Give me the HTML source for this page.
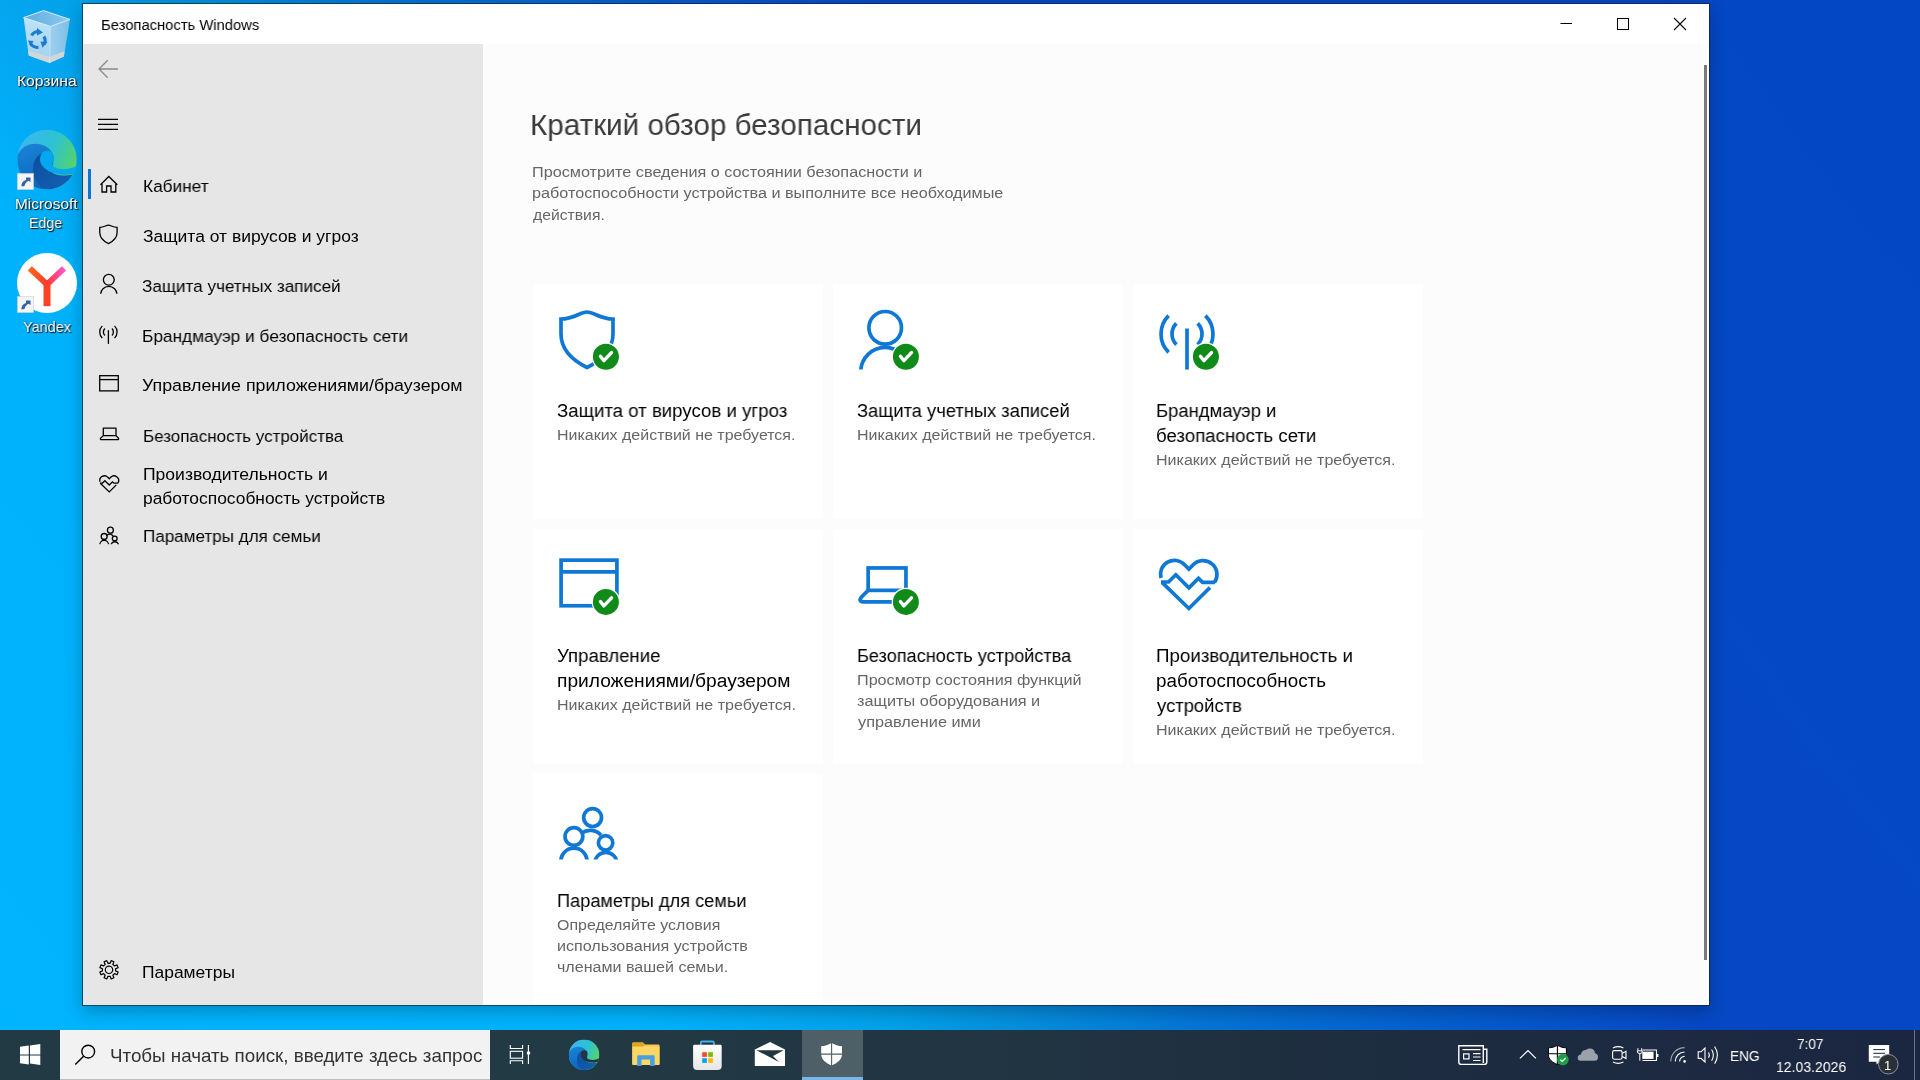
<!DOCTYPE html>
<html><head><meta charset="utf-8"><title>Безопасность Windows</title>
<style>
html,body{margin:0;padding:0;width:1920px;height:1080px;overflow:hidden;}
body{position:relative;font-family:"Liberation Sans", sans-serif;background:linear-gradient(52deg,#00b4fd 0%,#00b2fb 25%,#04a8f2 29.5%,#02a0e8 34%,#0590dc 38%,#0574d4 45%,#0558cb 56%,#0648c4 63%,#0447c5 100%);}
.t{position:absolute;white-space:nowrap;font-family:"Liberation Sans", sans-serif;will-change:transform;}
.r{position:absolute;}
.ds{color:#fff;text-shadow:0 0 2px #000,1px 1px 1px #000;}
svg{position:absolute;left:0;top:0;}
</style></head><body>

<div class="r" style="left:82px;top:3px;width:1628px;height:1003px;box-shadow:0 5px 16px rgba(0,0,0,0.25);"></div>
<div class="r" style="left:82px;top:3px;width:1628px;height:1003px;box-sizing:border-box;border:1px solid rgba(20,30,40,0.7);"></div>
<div class="r" style="left:83px;top:4px;width:1626px;height:1001px;background:#fcfcfc;"></div>
<div class="r" style="left:83px;top:4px;width:1626px;height:40px;background:#ffffff;"></div>
<div class="r" style="left:83px;top:44px;width:400px;height:961px;background:#e6e6e6;"></div>
<div class="r" style="left:1707px;top:44px;width:2px;height:961px;background:#ffffff;"></div>
<div class="r" style="left:1704px;top:65px;width:3px;height:895px;background:#7a7a7a;box-shadow:0 0 0 1px #fff;"></div>
<div class="r" style="left:88px;top:169px;width:3px;height:30px;background:#0078d7;"></div>
<div class="r" style="left:533px;top:284px;width:290px;height:235px;background:#ffffff;"></div>
<div class="r" style="left:533px;top:529px;width:290px;height:235px;background:#ffffff;"></div>
<div class="r" style="left:533px;top:774px;width:290px;height:230px;background:#ffffff;"></div>
<div class="r" style="left:833px;top:284px;width:290px;height:235px;background:#ffffff;"></div>
<div class="r" style="left:833px;top:529px;width:290px;height:235px;background:#ffffff;"></div>
<div class="r" style="left:1133px;top:284px;width:290px;height:235px;background:#ffffff;"></div>
<div class="r" style="left:1133px;top:529px;width:290px;height:235px;background:#ffffff;"></div>
<div class="t" style="left:100.65px;top:15px;font-size:15.5px;line-height:19.38px;color:#000;transform:scaleX(0.9533);transform-origin:0 0;">Безопасность Windows</div>
<div class="t" style="left:143.31px;top:176px;font-size:17.4px;line-height:21.75px;color:#000;transform:scaleX(0.9915);transform-origin:0 0;">Кабинет</div>
<div class="t" style="left:142.60px;top:226px;font-size:17.4px;line-height:21.75px;color:#000;transform:scaleX(1.0038);transform-origin:0 0;">Защита от вирусов и угроз</div>
<div class="t" style="left:142.42px;top:276px;font-size:17.4px;line-height:21.75px;color:#000;transform:scaleX(0.9845);transform-origin:0 0;">Защита учетных записей</div>
<div class="t" style="left:142.41px;top:326px;font-size:17.4px;line-height:21.75px;color:#000;transform:scaleX(0.9932);transform-origin:0 0;">Брандмауэр и безопасность сети</div>
<div class="t" style="left:142.38px;top:375px;font-size:17.4px;line-height:21.75px;color:#000;transform:scaleX(1.0235);transform-origin:0 0;">Управление приложениями/браузером</div>
<div class="t" style="left:143.03px;top:426px;font-size:17.4px;line-height:21.75px;color:#000;transform:scaleX(0.9746);transform-origin:0 0;">Безопасность устройства</div>
<div class="t" style="left:142.99px;top:464px;font-size:17.4px;line-height:21.75px;color:#000;transform:scaleX(1.0083);transform-origin:0 0;">Производительность и</div>
<div class="t" style="left:143.00px;top:488px;font-size:17.4px;line-height:21.75px;color:#000;">работоспособность устройств</div>
<div class="t" style="left:143.02px;top:526px;font-size:17.4px;line-height:21.75px;color:#000;transform:scaleX(0.9810);transform-origin:0 0;">Параметры для семьи</div>
<div class="t" style="left:142.20px;top:962px;font-size:17.4px;line-height:21.75px;color:#000;transform:scaleX(1.0022);transform-origin:0 0;">Параметры</div>
<div class="t" style="left:530.03px;top:106px;font-size:30px;line-height:37.50px;color:#3a3a3a;transform:scaleX(0.9873);transform-origin:0 0;">Краткий обзор безопасности</div>
<div class="t" style="left:531.95px;top:162px;font-size:15.5px;line-height:19.38px;color:#666666;transform:scaleX(1.0458);transform-origin:0 0;">Просмотрите сведения о состоянии безопасности и</div>
<div class="t" style="left:531.96px;top:183px;font-size:15.5px;line-height:19.38px;color:#666666;transform:scaleX(1.0444);transform-origin:0 0;">работоспособности устройства и выполните все необходимые</div>
<div class="t" style="left:533.00px;top:205px;font-size:15.5px;line-height:19.38px;color:#666666;transform:scaleX(1.0143);transform-origin:0 0;">действия.</div>
<div class="t" style="left:556.71px;top:399px;font-size:18.8px;line-height:23.50px;color:#000;transform:scaleX(0.9924);transform-origin:0 0;">Защита от вирусов и угроз</div>
<div class="t" style="left:556.67px;top:425px;font-size:15.5px;line-height:19.38px;color:#666666;transform:scaleX(1.0306);transform-origin:0 0;">Никаких действий не требуется.</div>
<div class="t" style="left:856.92px;top:399px;font-size:18.8px;line-height:23.50px;color:#000;transform:scaleX(0.9759);transform-origin:0 0;">Защита учетных записей</div>
<div class="t" style="left:856.87px;top:425px;font-size:15.5px;line-height:19.38px;color:#666666;transform:scaleX(1.0328);transform-origin:0 0;">Никаких действий не требуется.</div>
<div class="t" style="left:1156.42px;top:399px;font-size:18.8px;line-height:23.50px;color:#000;transform:scaleX(0.9821);transform-origin:0 0;">Брандмауэр и</div>
<div class="t" style="left:1156.41px;top:424px;font-size:18.8px;line-height:23.50px;color:#000;transform:scaleX(0.9925);transform-origin:0 0;">безопасность сети</div>
<div class="t" style="left:1156.37px;top:450px;font-size:15.5px;line-height:19.38px;color:#666666;transform:scaleX(1.0349);transform-origin:0 0;">Никаких действий не требуется.</div>
<div class="t" style="left:556.91px;top:644px;font-size:18.8px;line-height:23.50px;color:#000;transform:scaleX(0.9913);transform-origin:0 0;">Управление</div>
<div class="t" style="left:556.88px;top:669px;font-size:18.8px;line-height:23.50px;color:#000;transform:scaleX(1.0211);transform-origin:0 0;">приложениями/браузером</div>
<div class="t" style="left:556.87px;top:695px;font-size:15.5px;line-height:19.38px;color:#666666;transform:scaleX(1.0328);transform-origin:0 0;">Никаких действий не требуется.</div>
<div class="t" style="left:856.93px;top:644px;font-size:18.8px;line-height:23.50px;color:#000;transform:scaleX(0.9661);transform-origin:0 0;">Безопасность устройства</div>
<div class="t" style="left:856.86px;top:670px;font-size:15.5px;line-height:19.38px;color:#666666;transform:scaleX(1.0437);transform-origin:0 0;">Просмотр состояния функций</div>
<div class="t" style="left:856.85px;top:691px;font-size:15.5px;line-height:19.38px;color:#666666;transform:scaleX(1.0503);transform-origin:0 0;">защиты оборудования и</div>
<div class="t" style="left:857.90px;top:712px;font-size:15.5px;line-height:19.38px;color:#666666;transform:scaleX(1.0500);transform-origin:0 0;">управление ими</div>
<div class="t" style="left:1156.41px;top:644px;font-size:18.8px;line-height:23.50px;color:#000;transform:scaleX(0.9949);transform-origin:0 0;">Производительность и</div>
<div class="t" style="left:1156.40px;top:669px;font-size:18.8px;line-height:23.50px;color:#000;">работоспособность</div>
<div class="t" style="left:1157.40px;top:694px;font-size:18.8px;line-height:23.50px;color:#000;transform:scaleX(0.9814);transform-origin:0 0;">устройств</div>
<div class="t" style="left:1156.37px;top:720px;font-size:15.5px;line-height:19.38px;color:#666666;transform:scaleX(1.0349);transform-origin:0 0;">Никаких действий не требуется.</div>
<div class="t" style="left:556.93px;top:889px;font-size:18.8px;line-height:23.50px;color:#000;transform:scaleX(0.9680);transform-origin:0 0;">Параметры для семьи</div>
<div class="t" style="left:556.87px;top:915px;font-size:15.5px;line-height:19.38px;color:#666666;transform:scaleX(1.0280);transform-origin:0 0;">Определяйте условия</div>
<div class="t" style="left:556.86px;top:936px;font-size:15.5px;line-height:19.38px;color:#666666;transform:scaleX(1.0390);transform-origin:0 0;">использования устройств</div>
<div class="t" style="left:556.86px;top:957px;font-size:15.5px;line-height:19.38px;color:#666666;transform:scaleX(1.0356);transform-origin:0 0;">членами вашей семьи.</div>
<div class="r" style="left:0;top:1030px;width:1920px;height:50px;background:linear-gradient(90deg,#223a44 0%,#223a44 28%,#213542 52%,#1e2e40 68%,#1b2641 100%);"></div>
<div class="r" style="left:60px;top:1030px;width:430px;height:50px;background:#f2f2f2;"></div>
<div class="r" style="left:60px;top:1079px;width:430px;height:1px;background:#bdbdbd;"></div>
<div class="r" style="left:802px;top:1030px;width:61px;height:50px;background:#4e5f67;"></div>
<div class="r" style="left:802px;top:1077px;width:61px;height:3px;background:#77b8ec;"></div>
<div class="r" style="left:1914px;top:1030px;width:1px;height:50px;background:#6a7588;"></div>
<div class="t" style="left:109.79px;top:1044px;font-size:18.6px;line-height:23.25px;color:#333333;transform:scaleX(1.0093);transform-origin:0 0;">Чтобы начать поиск, введите здесь запрос</div>
<div class="t" style="left:1730.37px;top:1046px;font-size:15.5px;line-height:19.38px;color:#ffffff;transform:scaleX(0.8828);transform-origin:0 0;">ENG</div>
<div class="t" style="left:1797.02px;top:1034px;font-size:15.5px;line-height:19.38px;color:#ffffff;transform:scaleX(0.8759);transform-origin:0 0;">7:07</div>
<div class="t" style="left:1776.09px;top:1057px;font-size:15.5px;line-height:19.38px;color:#ffffff;transform:scaleX(0.9053);transform-origin:0 0;">12.03.2026</div>
<div class="t" style="left:16.96px;top:72px;font-size:15px;line-height:18.75px;color:#fff;transform:scaleX(1.0429);transform-origin:0 0;text-shadow:1px 1px 1px rgba(0,0,0,0.95),0 0 2px rgba(0,0,0,0.5);">Корзина</div>
<div class="t" style="left:15.07px;top:195px;font-size:15px;line-height:18.75px;color:#fff;transform:scaleX(1.0283);transform-origin:0 0;text-shadow:1px 1px 1px rgba(0,0,0,0.95),0 0 2px rgba(0,0,0,0.5);">Microsoft</div>
<div class="t" style="left:29.05px;top:214px;font-size:15px;line-height:18.75px;color:#fff;transform:scaleX(0.9471);transform-origin:0 0;text-shadow:1px 1px 1px rgba(0,0,0,0.95),0 0 2px rgba(0,0,0,0.5);">Edge</div>
<div class="t" style="left:22.64px;top:318px;font-size:15px;line-height:18.75px;color:#fff;transform:scaleX(0.9646);transform-origin:0 0;text-shadow:1px 1px 1px rgba(0,0,0,0.95),0 0 2px rgba(0,0,0,0.5);">Yandex</div>
<svg width="1920" height="1080" viewBox="0 0 1920 1080"><defs><clipPath id="clipP" clipPathUnits="userSpaceOnUse"><rect x="0" y="0" width="80" height="69.6"/></clipPath><clipPath id="clipF" clipPathUnits="userSpaceOnUse"><rect x="0" y="0" width="80" height="59.6"/></clipPath></defs><g transform="translate(550,300)" fill="none" stroke="#0f78d4" stroke-width="3.7"><path d="M37,12 C30,12 24,19 11,19 L11,34 C11,50 24,61 37,67.5 C50,61 63,50 63,34 L63,19 C50,19 44,12 37,12 Z"/></g><g transform="translate(850,300)" fill="none" stroke="#0f78d4" stroke-width="3.7"><circle cx="35.2" cy="27.8" r="16.3"/><path clip-path="url(#clipP)" d="M10.7,71.9 A24.5,24.5 0 0 1 59.7,71.9"/></g><g transform="translate(1150,300)" fill="none" stroke="#0f78d4" stroke-width="3.7"><path d="M37,28.5 L37,69.6"/><path d="M18.62,15.62 A26,26 0 0 0 18.62,52.38"/><path d="M55.38,15.62 A26,26 0 0 1 55.38,52.38"/><path d="M26.39,23.39 A15,15 0 0 0 26.39,44.61"/><path d="M47.61,23.39 A15,15 0 0 1 47.61,44.61"/></g><g transform="translate(550,550)" fill="none" stroke="#0f78d4" stroke-width="3.7"><rect x="11.1" y="10.15" width="55.8" height="45.6"/><path d="M11.1,21.9 L66.9,21.9"/></g><g transform="translate(850,550)" fill="none" stroke="#0f78d4" stroke-width="3.7"><rect x="18.15" y="17.95" width="37.8" height="22.4"/><path d="M18.15,40.35 L12,46.5 Q9,49.5 10.5,51 Q11.5,51.8 14,51.8 L62,51.8"/></g><g transform="translate(1150,550)" fill="none" stroke="#0f78d4" stroke-width="3.7"><path d="M11,28 A13.9,13.9 0 0 1 34.6,14.8 L38.9,19.1 L43.2,14.8 A13.9,13.9 0 0 1 64.5,32.5"/><path d="M11,32 L18.5,32 L25.8,24.8 L38.9,37.8 L48.5,28.3 L52.5,32.3 L65,32.3"/><path d="M12,32.3 L38.9,58.5 L60,37.5"/></g><g transform="translate(550,800)" fill="none" stroke="#0f78d4" stroke-width="3.7"><circle cx="42.6" cy="17.6" r="8.9"/><circle cx="23.9" cy="36.5" r="8.9"/><circle cx="55.6" cy="42.8" r="7.2"/><path clip-path="url(#clipF)" d="M10.8,61.25 A13.15,13.15 0 0 1 37.1,61.25"/><path clip-path="url(#clipF)" d="M44.8,63.35 A11.05,11.05 0 0 1 66.9,63.35"/><path d="M31.5,33.2 A14.5,14.5 0 0 1 51,35.2"/></g><circle cx="605.9" cy="356.7" r="14.2" fill="#fff" stroke="none"/><circle cx="605.9" cy="356.7" r="13" fill="#108a18" stroke="none"/><path d="M600.4,356.3 L603.9,360.7 L611.5,352.59999999999997" fill="none" stroke="#fff" stroke-width="3.4" stroke-linecap="round" stroke-linejoin="round"/><circle cx="905.9" cy="356.7" r="14.2" fill="#fff" stroke="none"/><circle cx="905.9" cy="356.7" r="13" fill="#108a18" stroke="none"/><path d="M900.4,356.3 L903.9,360.7 L911.5,352.59999999999997" fill="none" stroke="#fff" stroke-width="3.4" stroke-linecap="round" stroke-linejoin="round"/><circle cx="1205.9" cy="356.7" r="14.2" fill="#fff" stroke="none"/><circle cx="1205.9" cy="356.7" r="13" fill="#108a18" stroke="none"/><path d="M1200.4,356.3 L1203.9,360.7 L1211.5,352.59999999999997" fill="none" stroke="#fff" stroke-width="3.4" stroke-linecap="round" stroke-linejoin="round"/><circle cx="605.9" cy="601.9" r="14.2" fill="#fff" stroke="none"/><circle cx="605.9" cy="601.9" r="13" fill="#108a18" stroke="none"/><path d="M600.4,601.5 L603.9,605.9 L611.5,597.8" fill="none" stroke="#fff" stroke-width="3.4" stroke-linecap="round" stroke-linejoin="round"/><circle cx="905.9" cy="601.9" r="14.2" fill="#fff" stroke="none"/><circle cx="905.9" cy="601.9" r="13" fill="#108a18" stroke="none"/><path d="M900.4,601.5 L903.9,605.9 L911.5,597.8" fill="none" stroke="#fff" stroke-width="3.4" stroke-linecap="round" stroke-linejoin="round"/><g transform="translate(96.1,221.1) scale(0.3333)" fill="none" stroke="#000" stroke-width="3.9"><path d="M37,12 C30,12 24,19 11,19 L11,34 C11,50 24,61 37,67.5 C50,61 63,50 63,34 L63,19 C50,19 44,12 37,12 Z"/></g><g transform="translate(97.07,270.5) scale(0.3333)" fill="none" stroke="#000" stroke-width="3.9"><circle cx="35.2" cy="27.8" r="16.3"/><path clip-path="url(#clipP)" d="M10.7,71.9 A24.5,24.5 0 0 1 59.7,71.9"/></g><g transform="translate(96.07,320.67) scale(0.3333)" fill="none" stroke="#000" stroke-width="3.9"><path d="M37,28.5 L37,69.6"/><path d="M18.62,15.62 A26,26 0 0 0 18.62,52.38"/><path d="M55.38,15.62 A26,26 0 0 1 55.38,52.38"/><path d="M26.39,23.39 A15,15 0 0 0 26.39,44.61"/><path d="M47.61,23.39 A15,15 0 0 1 47.61,44.61"/></g><g transform="translate(96,372.3) scale(0.3333)" fill="none" stroke="#000" stroke-width="3.9"><rect x="11.1" y="10.15" width="55.8" height="45.6"/><path d="M11.1,21.9 L66.9,21.9"/></g><g transform="translate(96.3,472.4) scale(0.3333)" fill="none" stroke="#000" stroke-width="3.9"><path d="M11,28 A13.9,13.9 0 0 1 34.6,14.8 L38.9,19.1 L43.2,14.8 A13.9,13.9 0 0 1 64.5,32.5"/><path d="M11,32 L18.5,32 L25.8,24.8 L38.9,37.8 L48.5,28.3 L52.5,32.3 L65,32.3"/><path d="M12,32.3 L38.9,58.5 L60,37.5"/></g><g transform="translate(96.2,524.3) scale(0.3333)" fill="none" stroke="#000" stroke-width="3.9"><circle cx="42.6" cy="17.6" r="8.9"/><circle cx="23.9" cy="36.5" r="8.9"/><circle cx="55.6" cy="42.8" r="7.2"/><path clip-path="url(#clipF)" d="M10.8,61.25 A13.15,13.15 0 0 1 37.1,61.25"/><path clip-path="url(#clipF)" d="M44.8,63.35 A11.05,11.05 0 0 1 66.9,63.35"/><path d="M31.5,33.2 A14.5,14.5 0 0 1 51,35.2"/></g><path d="M100.5,184.8 L108.8,176.5 L117.3,184.8 M102,183.2 L102,192 L106.6,192 L106.6,186 L111,186 L111,192 L115.8,192 L115.8,183.2" fill="none" stroke="#000" stroke-width="1.3"/><path d="M103.3,435.6 L103.3,428.1 L116,428.1 L116,435.6 Z M103.3,435.6 L100.5,438.3 Q100,439.6 101.5,439.6 L117.6,439.6 Q119,439.6 118.5,438.3 L116,435.6" fill="none" stroke="#000" stroke-width="1.3" stroke-linejoin="round"/><path d="M107.75,60.2 L99,69 L107.75,77.7 M99.5,69 L118,69" fill="none" stroke="#8a8a8a" stroke-width="1.3"/><path d="M98,119.3 L118,119.3 M98,124.4 L118,124.4 M98,129.4 L118,129.4" fill="none" stroke="#000" stroke-width="1.2"/><path d="M109.00,963.20 L110.09,963.29 L111.19,960.66 L113.91,961.79 L112.83,964.43 L113.67,965.13 L114.37,965.97 L117.01,964.89 L118.14,967.61 L115.51,968.71 L115.60,969.80 L115.51,970.89 L118.14,971.99 L117.01,974.71 L114.37,973.63 L113.67,974.47 L112.83,975.17 L113.91,977.81 L111.19,978.94 L110.09,976.31 L109.00,976.40 L107.91,976.31 L106.81,978.94 L104.09,977.81 L105.17,975.17 L104.33,974.47 L103.63,973.63 L100.99,974.71 L99.86,971.99 L102.49,970.89 L102.40,969.80 L102.49,968.71 L99.86,967.61 L100.99,964.89 L103.63,965.97 L104.33,965.13 L105.17,964.43 L104.09,961.79 L106.81,960.66 L107.91,963.29 Z" fill="none" stroke="#000" stroke-width="1.2" stroke-linejoin="round"/><circle cx="109" cy="969.8" r="3.7" fill="none" stroke="#000" stroke-width="1.2"/><path d="M1560.5,23.5 L1572,23.5" stroke="#000" stroke-width="1" fill="none"/><rect x="1617.5" y="18.5" width="11" height="11" stroke="#000" stroke-width="1" fill="none"/><path d="M1674,18 L1686,30 M1686,18 L1674,30" stroke="#000" stroke-width="1.1" fill="none"/><path d="M20,1046.8 L28.8,1045.6 L28.8,1054.4 L20,1054.4 Z M30,1045.4 L40.3,1044 L40.3,1054.4 L30,1054.4 Z M20,1055.6 L28.8,1055.6 L28.8,1064.4 L20,1063.2 Z M30,1055.6 L40.3,1055.6 L40.3,1065 L30,1063.6 Z" fill="#fff"/><circle cx="88.2" cy="1051.6" r="6.4" fill="none" stroke="#000" stroke-width="1.4"/><path d="M83.6,1056.2 L75.3,1064.5" stroke="#000" stroke-width="1.5" fill="none"/><path d="M510.3,1045 L510.3,1048.5 L522.6,1048.5 L522.6,1045 M510.3,1064 L510.3,1060.8 L522.6,1060.8 L522.6,1064 M528.4,1045 L528.4,1064" fill="none" stroke="#fff" stroke-width="1.1"/><rect x="510.3" y="1051.3" width="12.3" height="6.9" fill="none" stroke="#fff" stroke-width="1.1"/><rect x="526.9" y="1051.6" width="3.2" height="2.8" fill="#fff"/><g transform="translate(568.8,1039.6) scale(0.51)">
<defs>
<linearGradient id="eg1t" x1="0" y1="0.3" x2="1" y2="0.7"><stop offset="0" stop-color="#3bb8f0"/><stop offset="0.5" stop-color="#2cc2d4"/><stop offset="1" stop-color="#5cd65a"/></linearGradient>
<linearGradient id="eg2t" x1="0" y1="0" x2="0.3" y2="1"><stop offset="0" stop-color="#1a86d6"/><stop offset="1" stop-color="#0c66c0"/></linearGradient>
<linearGradient id="eg3t" x1="0" y1="0" x2="1" y2="1"><stop offset="0" stop-color="#0d4e9e"/><stop offset="1" stop-color="#1460b4"/></linearGradient>
<clipPath id="ect"><circle cx="30" cy="30" r="30"/></clipPath>
</defs>
<g clip-path="url(#ect)">
<rect x="0" y="0" width="60" height="60" fill="url(#eg1t)"/>
<path d="M0,26 C4,17 12,14 18,14 C26,14 34,18 36.5,26 L36.5,31 L34,60 L0,60 Z" fill="url(#eg2t)"/>
<path d="M36.5,26 C36,21 30,20 26,22 C22.5,24 22.5,30 24,34 C27,41 36,44 44,45 C50,45.5 55,45 60,43 L60,36 C55,40 46,40.5 40.5,39 C37,38 35,36.5 35.5,34 C36,32 37,29 36.5,26 Z" fill="#22363f"/>
<path d="M25,23.5 C19,26 16,32 16,40 C16,52 24,60 32,60 C42,60 52,53 56,45 C50,46.5 44,46.5 38,44.5 C30,42 24,37 23,32 C22.5,28 23.5,25.5 25,23.5 Z" fill="url(#eg3t)"/>
</g></g><path d="M632.3,1043.4 Q632.3,1042.4 633.3,1042.4 L643,1042.4 L645,1044.5 L658.5,1044.5 Q659.5,1044.5 659.5,1045.5 L659.5,1064.1 Q659.5,1065.1 658.5,1065.1 L633.3,1065.1 Q632.3,1065.1 632.3,1064.1 Z" fill="#f8c94c"/><path d="M632.3,1046.5 L659.5,1046.5 L659.5,1064.1 Q659.5,1065.1 658.5,1065.1 L633.3,1065.1 Q632.3,1065.1 632.3,1064.1 Z" fill="#fcd765"/><path d="M632.3,1043.4 Q632.3,1042.4 633.3,1042.4 L643,1042.4 L645,1044.5 L643.5,1046.5 L632.3,1046.5 Z" fill="#e0a51f"/><path d="M637.2,1066 L637.2,1056.3 Q637.2,1055.3 638.2,1055.3 L653.7,1055.3 Q654.7,1055.3 654.7,1056.3 L654.7,1066 L650.1,1066 L650.1,1059.4 L641.5,1059.4 L641.5,1066 Z" fill="#4a9fe0"/><path d="M700.8,1046.5 L700.8,1043 Q700.8,1041.5 702.3,1041.5 L712.5,1041.5 Q714,1041.5 714,1043 L714,1046.5" fill="none" stroke="#3fb1ee" stroke-width="1.8"/><defs><linearGradient id="stg" x1="0" y1="0" x2="0" y2="1"><stop offset="0" stop-color="#ffffff"/><stop offset="1" stop-color="#e6e6e6"/></linearGradient></defs><path d="M693.1,1046 Q693.1,1044.7 694.4,1044.7 L720.4,1044.7 Q721.7,1044.7 721.7,1046 L721.7,1066 Q721.7,1070 717.7,1070 L697.1,1070 Q693.1,1070 693.1,1066 Z" fill="url(#stg)"/><rect x="702.2" y="1052.2" width="4.7" height="4.7" fill="#f25022"/><rect x="708.2" y="1052.2" width="4.7" height="4.7" fill="#7fba00"/><rect x="702.2" y="1058.2" width="4.7" height="4.7" fill="#00a4ef"/><rect x="708.2" y="1058.2" width="4.7" height="4.7" fill="#ffb900"/><path d="M754.8,1049.5 L770.1,1042 L785,1049.5 L785,1066.1 L754.8,1066.1 Z" fill="#fff"/><path d="M756.4,1050.2 L783.7,1050.2 L773,1056 L778.9,1061.9 Z" fill="#22363f"/><path d="M831.6,1043 C828,1045 825,1046.2 821.2,1046.2 L821.2,1054 C821.2,1059.5 826,1063 831.6,1065.5 C837.2,1063 842,1059.5 842,1054 L842,1046.2 C838.2,1046.2 835.2,1045 831.6,1043 Z" fill="#fff"/><path d="M831.6,1043 L831.6,1066 M821,1054.1 L842.2,1054.1" stroke="#4e5f67" stroke-width="1.1"/><path d="M1458.8,1045.8 L1483.3,1045.8 L1483.3,1049.2 L1486.8,1049.2 L1486.8,1062 Q1486.8,1064.4 1484.4,1064.4 L1461.2,1064.4 Q1458.8,1064.4 1458.8,1062 Z M1483.3,1049.2 L1483.3,1063" fill="none" stroke="#fff" stroke-width="1.4"/><path d="M1462.5,1049.6 L1480.5,1049.6 M1473,1053.6 L1480.5,1053.6 M1473,1057 L1480.5,1057 M1473,1060.5 L1480.5,1060.5" stroke="#fff" stroke-width="1.2"/><rect x="1463.6" y="1053.9" width="5.4" height="5" fill="none" stroke="#fff" stroke-width="1.2"/><path d="M1519.9,1058.4 L1528,1050.6 L1535.9,1058.4" fill="none" stroke="#fff" stroke-width="1.2"/><path d="M1557.4,1045.3 C1554.5,1047 1551.5,1047.8 1548.4,1047.8 L1548.4,1054.5 C1548.4,1059.5 1552.5,1062.5 1557.4,1064.6 C1562.3,1062.5 1566.4,1059.5 1566.4,1054.5 L1566.4,1047.8 C1563.3,1047.8 1560.3,1047 1557.4,1045.3 Z" fill="#fff" stroke="#000" stroke-width="1"/><path d="M1557.4,1045.5 L1557.4,1064.5 M1548.4,1053.8 L1566.4,1053.8" stroke="#000" stroke-width="1.1"/><circle cx="1562.9" cy="1059.6" r="5.8" fill="#1f9c48"/><path d="M1560.2,1059.6 L1562.2,1061.5 L1565.7,1058" fill="none" stroke="#fff" stroke-width="1.2"/><path d="M1580.5,1060.8 Q1577.7,1060.8 1577.7,1057.8 Q1577.7,1054.6 1581,1054.4 Q1581.5,1050.2 1585.8,1050 Q1588,1048.3 1590.8,1048.6 Q1594.6,1049.2 1595,1053.3 Q1598,1053.8 1598,1057.2 Q1598,1060.8 1594.5,1060.8 Z" fill="#9aa1ab"/><rect x="1612.6" y="1050.6" width="9.5" height="8.6" rx="1.6" fill="none" stroke="#fff" stroke-width="1.1"/><path d="M1622.3,1053.2 L1626,1051.3 L1626,1058.5 L1622.3,1056.6" fill="none" stroke="#fff" stroke-width="1.1"/><path d="M1613,1048 Q1618,1045.2 1623.4,1048 M1613,1062 Q1618,1064.8 1623.4,1062" fill="none" stroke="#fff" stroke-width="1.1"/><path d="M1639.8,1060.7 L1639.8,1053.5 M1637.9,1050.8 L1637.9,1048.2 M1641.7,1050.8 L1641.7,1048.2 M1637.4,1050.8 L1642.2,1050.8 L1642.2,1052 Q1642.2,1053.5 1639.8,1053.5 Q1637.4,1053.5 1637.4,1052 Z" fill="none" stroke="#fff" stroke-width="1"/><path d="M1642.5,1050 L1656.5,1050 L1656.5,1060.5 L1642.5,1060.5" fill="none" stroke="#fff" stroke-width="1.1"/><rect x="1657" y="1054" width="1.4" height="3" fill="#fff"/><rect x="1642.3" y="1051.7" width="11.2" height="7.2" fill="#fff"/><circle cx="1684.6" cy="1061.4" r="1.3" fill="#fff"/><path d="M1679.6,1061.4 A5,5 0 0 1 1684.6,1056.4 M1675.2,1061.4 A9.4,9.4 0 0 1 1684.6,1052" fill="none" stroke="#fff" stroke-width="1.1"/><path d="M1670.8,1061.4 A13.8,13.8 0 0 1 1684.6,1047.6" fill="none" stroke="#9aa3b0" stroke-width="1.1"/><path d="M1698.2,1051.8 L1701,1051.8 L1705,1048 L1705,1062 L1701,1058.4 L1698.2,1058.4 Z" fill="none" stroke="#fff" stroke-width="1.1"/><path d="M1708.5,1052.5 Q1710.2,1055.1 1708.5,1057.7 M1711.6,1049.5 Q1715.2,1055.1 1711.6,1060.7 M1714.6,1046.5 Q1720.2,1055.1 1714.6,1063.7" fill="none" stroke="#fff" stroke-width="1.1"/><path d="M1868.8,1045 L1889.2,1045 L1889.2,1061.7 L1879.5,1061.7 L1876.5,1064.5 L1876.5,1061.7 L1868.8,1061.7 Z" fill="#fff"/><path d="M1873.3,1049.6 L1885,1049.6 M1873.3,1053.3 L1885,1053.3 M1873.3,1057 L1880,1057" stroke="#1b2641" stroke-width="1"/><circle cx="1888.3" cy="1064.2" r="9.8" fill="#2b2f36" stroke="#8a8f96" stroke-width="1"/><defs><linearGradient id="rbf" x1="0" y1="0" x2="0" y2="1"><stop offset="0" stop-color="#c6e6f8"/><stop offset="1" stop-color="#a9d3ee"/></linearGradient><linearGradient id="rbr" x1="0" y1="0" x2="1" y2="0"><stop offset="0" stop-color="#a6d2ee"/><stop offset="1" stop-color="#86bfe4"/></linearGradient><linearGradient id="rbt" x1="0" y1="0" x2="1" y2="0"><stop offset="0" stop-color="#5eaee2"/><stop offset="1" stop-color="#8cc8ee"/></linearGradient></defs><path d="M23.6,17.6 L43.5,10.6 L69.9,19.4 L50.5,26.4 Z" fill="url(#rbt)"/><path d="M23.6,17.6 L50.5,26.4 L49.5,63 L28.7,55.6 Z" fill="url(#rbf)" opacity="0.95"/><path d="M50.5,26.4 L69.9,19.4 L63.9,56.5 L49.5,63 Z" fill="url(#rbr)" opacity="0.95"/><path d="M28.2,50.5 L49.6,57 L64.6,51 L63.9,56.5 L49.5,63 L28.7,55.6 Z" fill="#d3d6d9"/><path d="M23.6,17.6 L43.5,10.6 L69.9,19.4 L50.5,26.4 Z" fill="none" stroke="#e4f3fc" stroke-width="0.9"/><path d="M50.5,26.4 L49.5,63" stroke="#d6ecf9" stroke-width="0.7"/><g fill="none" stroke="#1d7ad3" stroke-width="3.2" stroke-linecap="butt"><path d="M31.5,35.5 Q34,31.5 38.5,31.5"/><path d="M43.8,36.5 Q46.5,40.5 44,44.5"/><path d="M38.5,47.5 Q33,47.5 30.5,43.5"/></g><g fill="#1d7ad3"><path d="M37,28 L43,32.5 L37,35.5 Z"/><path d="M47.5,42 L42.5,47.8 L40.5,41.5 Z"/><path d="M28,40.5 L33.5,41 L30.5,46.5 Z"/></g><g transform="translate(17.2,129.8) scale(0.9933333333333334)">
<defs>
<linearGradient id="eg1d" x1="0" y1="0.3" x2="1" y2="0.7"><stop offset="0" stop-color="#3bb8f0"/><stop offset="0.5" stop-color="#2cc2d4"/><stop offset="1" stop-color="#5cd65a"/></linearGradient>
<linearGradient id="eg2d" x1="0" y1="0" x2="0.3" y2="1"><stop offset="0" stop-color="#1a86d6"/><stop offset="1" stop-color="#0c66c0"/></linearGradient>
<linearGradient id="eg3d" x1="0" y1="0" x2="1" y2="1"><stop offset="0" stop-color="#0d4e9e"/><stop offset="1" stop-color="#1460b4"/></linearGradient>
<clipPath id="ecd"><circle cx="30" cy="30" r="30"/></clipPath>
</defs>
<g clip-path="url(#ecd)">
<rect x="0" y="0" width="60" height="60" fill="url(#eg1d)"/>
<path d="M0,26 C4,17 12,14 18,14 C26,14 34,18 36.5,26 L36.5,31 L34,60 L0,60 Z" fill="url(#eg2d)"/>
<path d="M36.5,26 C36,21 30,20 26,22 C22.5,24 22.5,30 24,34 C27,41 36,44 44,45 C50,45.5 55,45 60,43 L60,36 C55,40 46,40.5 40.5,39 C37,38 35,36.5 35.5,34 C36,32 37,29 36.5,26 Z" fill="#03a8ee"/>
<path d="M25,23.5 C19,26 16,32 16,40 C16,52 24,60 32,60 C42,60 52,53 56,45 C50,46.5 44,46.5 38,44.5 C30,42 24,37 23,32 C22.5,28 23.5,25.5 25,23.5 Z" fill="url(#eg3d)"/>
</g></g><circle cx="47" cy="283" r="30" fill="#fff"/><defs><linearGradient id="yg" gradientUnits="userSpaceOnUse" x1="28" y1="268" x2="66" y2="268"><stop offset="0" stop-color="#ff6a12"/><stop offset="0.5" stop-color="#ff3a36"/><stop offset="1" stop-color="#ff5ad8"/></linearGradient></defs><path d="M29.8,268.4 L47,284.5 L64,268.4" fill="none" stroke="url(#yg)" stroke-width="6" stroke-linejoin="miter"/><path d="M47,282 L47,306.2" fill="none" stroke="#ff4128" stroke-width="7"/><rect x="17.5" y="173.5" width="16" height="16" fill="#f4f4f4" stroke="#d0d0d0" stroke-width="0.6"/><path d="M21.5,186.5 Q21.0,181.5 26.0,180.0 L26.0,177.5 L30.5,177.5 L30.5,182.0 L28.5,180.7 Q25.0,182.5 24.5,186.0 Z" fill="#3462a8"/><rect x="17.5" y="296.5" width="16" height="16" fill="#f4f4f4" stroke="#d0d0d0" stroke-width="0.6"/><path d="M21.5,309.5 Q21.0,304.5 26.0,303.0 L26.0,300.5 L30.5,300.5 L30.5,305.0 L28.5,303.7 Q25.0,305.5 24.5,309.0 Z" fill="#3462a8"/></svg>
<div class="t" style="left:1883.50px;top:1058px;font-size:13px;line-height:16.25px;color:#fff;">1</div>
</body></html>
